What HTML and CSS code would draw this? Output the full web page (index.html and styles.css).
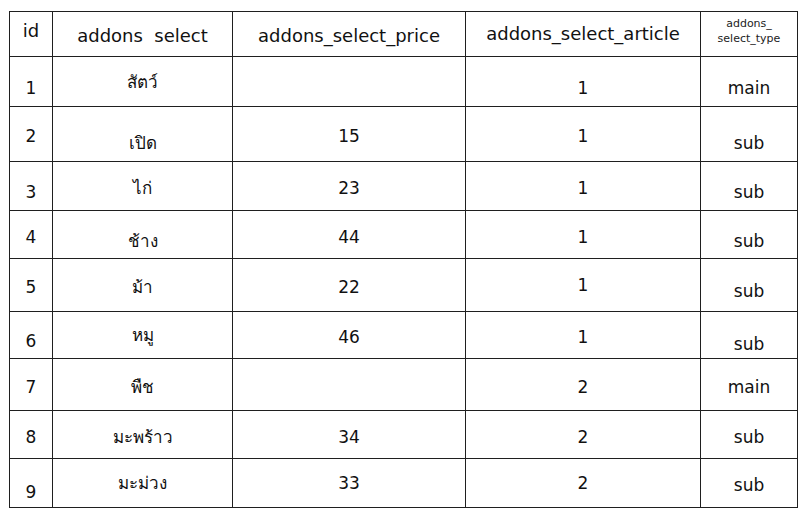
FILE: index.html
```html
<!DOCTYPE html>
<html lang="th">
<head>
<meta charset="utf-8">
<title>addons select</title>
<link rel="stylesheet" href="styles.css">
</head>
<body>
<table class="grid">
  <colgroup>
    <col class="c-id"><col class="c-name"><col class="c-price"><col class="c-art"><col class="c-type">
  </colgroup>
  <thead>
    <tr>
      <th class="hi">id</th>
      <th>addons&nbsp; select</th>
      <th>addons_select_price</th>
      <th class="mid">addons_select_article</th>
      <th class="small">addons_<br>select_type</th>
    </tr>
  </thead>
  <tbody>
    <tr><td class="lo">1</td><td class="th mid">สัตว์</td><td></td><td class="lo">1</td><td class="lo">main</td></tr>
    <tr><td>2</td><td class="th lo2">เปิด</td><td>15</td><td>1</td><td class="lo2">sub</td></tr>
    <tr><td class="lo">3</td><td class="th">ไก่</td><td>23</td><td>1</td><td class="lo">sub</td></tr>
    <tr><td>4</td><td class="th lo">ช้าง</td><td>44</td><td>1</td><td class="lo">sub</td></tr>
    <tr><td>5</td><td class="th">ม้า</td><td>22</td><td class="mid">1</td><td class="lo">sub</td></tr>
    <tr><td class="lo">6</td><td class="th mid">หมู</td><td>46</td><td>1</td><td class="lo2">sub</td></tr>
    <tr><td>7</td><td class="th">พืช</td><td></td><td>2</td><td>main</td></tr>
    <tr><td>8</td><td class="th">มะพร้าว</td><td>34</td><td>2</td><td>sub</td></tr>
    <tr><td class="lo2">9</td><td class="th mid">มะม่วง</td><td class="mid">33</td><td class="mid">2</td><td>sub</td></tr>
  </tbody>
</table>
</body>
</html>
```
FILE: styles.css
```css
html, body {
  margin: 0;
  padding: 0;
  background: #ffffff;
}

body {
  font-family: "DejaVu Sans", Verdana, sans-serif;
  color: #111111;
}

.grid {
  margin: 11px 0 0 9px;
  border-collapse: collapse;
  table-layout: fixed;
  width: 788px;
}

.c-id { width: 43px; }
.c-name { width: 180px; }
.c-price { width: 233px; }
.c-art { width: 235px; }
.c-type { width: 97px; }

.grid th,
.grid td {
  border: 1px solid #1f1f1f;
  text-align: center;
  vertical-align: middle;
  padding: 4px 0 0 0;
  line-height: 20px;
  font-size: 17px;
  font-weight: normal;
  white-space: nowrap;
}

.grid th {
  font-size: 18px;
}

.grid th.small {
  font-size: 11px;
  line-height: 15px;
  padding: 0 0 6px 0;
  color: #222222;
}

.grid .th {
  font-family: "DejaVu Sans", Tahoma, sans-serif;
}

.grid .hi { padding: 0 0 6px 0; }
.grid .mid { padding: 0; }
.grid .lo { padding: 12px 0 0 0; }
.grid .lo2 { padding: 18px 0 0 0; }

.grid thead tr { height: 45px; }
.grid tbody tr:nth-child(1) { height: 50px; }
.grid tbody tr:nth-child(2) { height: 55px; }
.grid tbody tr:nth-child(3) { height: 49px; }
.grid tbody tr:nth-child(4) { height: 48px; }
.grid tbody tr:nth-child(5) { height: 53px; }
.grid tbody tr:nth-child(6) { height: 47px; }
.grid tbody tr:nth-child(7) { height: 52px; }
.grid tbody tr:nth-child(8) { height: 48px; }
.grid tbody tr:nth-child(9) { height: 49px; }
```
